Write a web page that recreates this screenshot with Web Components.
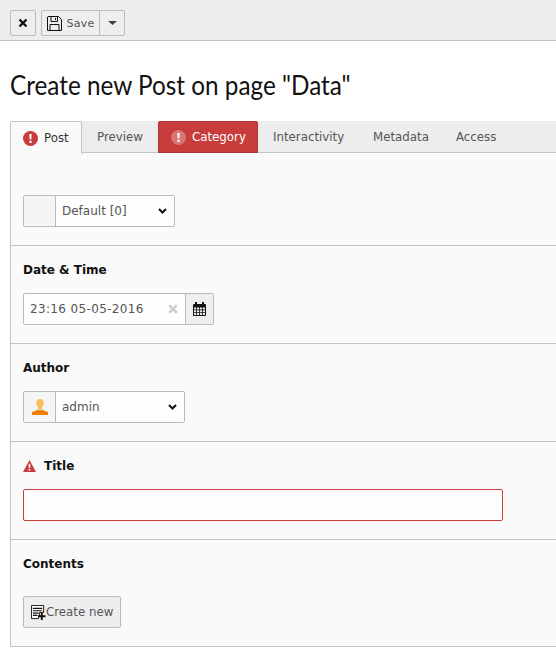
<!DOCTYPE html>
<html>
<head>
<meta charset="utf-8">
<title>Create new Post</title>
<style>
    html, body { margin: 0; padding: 0; background: #fff; overflow: hidden; height: 658px; }
    body { font-family: "DejaVu Sans", Verdana, sans-serif; font-size: 12px; color: #333; }
    svg { display: block; }
</style>
</head>
<body>

<doc-toolbar></doc-toolbar>
<page-title>Create new Post on page "Data"</page-title>

<tab-bar>
    <tab-item active error style="width:72px">Post</tab-item>
    <tab-item style="width:76px">Preview</tab-item>
    <tab-item danger error style="width:100px">Category</tab-item>
    <tab-item style="width:101px">Interactivity</tab-item>
    <tab-item style="width:83px;padding-left:14px">Metadata</tab-item>
    <tab-item style="padding-left:14px">Access</tab-item>
</tab-bar>

<form-panel>
    <form-section top>
        <select-box width="152" value="Default [0]"></select-box>
    </form-section>
    <form-section label="Date &amp; Time">
        <date-input value="23:16 05-05-2016"></date-input>
    </form-section>
    <form-section label="Author">
        <select-box width="162" value="admin" icon="user"></select-box>
    </form-section>
    <form-section label="Title" warn>
        <text-input></text-input>
    </form-section>
    <form-section label="Contents" last>
        <create-button>Create new</create-button>
    </form-section>
</form-panel>

<script>
// Small helper, every component sets its shadow markup the same way
class BaseElement extends HTMLElement {
    constructor() {
        super();
        this.attachShadow({ mode: 'open' });
    }
    connectedCallback() {
        this.shadowRoot.innerHTML = this.markup();
    }
}

class DocToolbar extends BaseElement {
    markup() {
        return `
            <style>
                :host { display: flex; box-sizing: border-box; height: 41px; padding: 10px 10px 0; gap: 5px;
                        background: #ededed; border-bottom: 1px solid #c3c3c3; }
                .btn { box-sizing: border-box; height: 26px; display: flex; align-items: center; justify-content: center;
                       background: #eee; border: 1px solid #bbb; border-radius: 2px; }
                .close { width: 26px; }
                .group { display: flex; }
                .save { width: 59px; gap: 5px; border-radius: 2px 0 0 2px; color: #555; font-size: 11px; letter-spacing: .2px; }
                .more { width: 26px; margin-left: -1px; border-radius: 0 2px 2px 0; }
            </style>
            <div class="btn close">
                <svg width="10" height="10" viewBox="0 0 10 10"><path d="M1.5 1.5L8.5 8.5M8.5 1.5L1.5 8.5" stroke="#111" stroke-width="2.4" fill="none"/></svg>
            </div>
            <div class="group">
                <div class="btn save">
                    <svg width="15" height="15" viewBox="0 0 15 15" fill="none" stroke="#111" stroke-width="1">
                        <path d="M1 .5H11.5L14.5 3.5V14.5H.5V1z"/>
                        <path d="M4 .5V5.5H10.5V.5M8.5 2V4"/>
                        <path d="M3 14.5V8.5H12V14.5"/>
                    </svg>
                    <span>Save</span>
                </div>
                <div class="btn more">
                    <svg width="9" height="4" viewBox="0 0 9 4"><path d="M0 0H9L4.5 4z" fill="#444"/></svg>
                </div>
            </div>
        `;
    }
}

class PageTitle extends BaseElement {
    markup() {
        return `
            <style>
                :host { display: block; height: 80px; padding: 29px 0 0 10px; box-sizing: border-box; white-space: nowrap;
                        font-family: Lato, "Liberation Sans", sans-serif; font-size: 27px; line-height: 30px; color: #111; }
                /* no condensed face installed, so squeeze the text to the heading's width */
                span { display: inline-block; transform: scaleX(.9); transform-origin: 0 0; }
            </style>
            <span><slot></slot></span>
        `;
    }
}

class TabBar extends BaseElement {
    markup() {
        return `
            <style>
                :host { display: flex; box-sizing: border-box; height: 32px; margin-left: 10px;
                        background: #ededed; border-bottom: 1px solid #c3c3c3; }
            </style>
            <slot></slot>
        `;
    }
}

class TabItem extends BaseElement {
    markup() {
        const danger = this.hasAttribute('danger');
        const fill = danger ? 'rgba(255,255,255,.3)' : '#c83c3c';
        const icon = this.hasAttribute('error') ? `
            <svg width="15" height="15" viewBox="0 0 15 15">
                <circle cx="7.5" cy="7.5" r="7.5" fill="${fill}"/>
                <path d="M6.3 3H8.7L8.3 8.6H6.7z M6.4 9.8H8.6V12H6.4z" fill="#fff"/>
            </svg>` : '';
        return `
            <style>
                :host { display: flex; align-items: center; gap: 6px; box-sizing: border-box; height: 32px;
                        padding: 0 0 0 15px; color: #555; white-space: nowrap; font-size: 11.8px; }
                :host([active]) { height: 33px; background: #fafafa; color: #333; border: 1px solid #c3c3c3; border-bottom: 0;
                                  border-radius: 2px 2px 0 0; padding: 0 0 0 12px; }
                :host([danger]) { height: 32px; background: #c83c3c; color: #fff; border: 1px solid #b53434; border-radius: 2px 2px 0 0; padding: 0 0 0 12px; }
            </style>
            ${icon}<slot></slot>
        `;
    }
}

class FormPanel extends BaseElement {
    markup() {
        return `
            <style>
                :host { display: block; margin-left: 10px; background: #fafafa; border-left: 1px solid #c3c3c3; border-bottom: 1px solid #c3c3c3; }
            </style>
            <slot></slot>
        `;
    }
}

class FormSection extends BaseElement {
    markup() {
        const label = this.getAttribute('label');
        const warn = this.hasAttribute('warn') ? `
            <svg width="13" height="12" viewBox="0 0 13 12" style="flex:none"><path d="M6.5 0L13 12H0z" fill="#c83c3c"/><path d="M5.7 3.8H7.3V8H5.7zM5.7 9H7.3V10.6H5.7z" fill="#fff"/></svg>` : '';
        return `
            <style>
                :host { display: block; box-sizing: border-box; height: 98px; padding: 15px 12px 0; border-bottom: 1px solid #c3c3c3; }
                :host([top]) { height: 93px; padding-top: 42px; }
                :host([last]) { height: 106px; border-bottom: 0; }
                .label { display: flex; align-items: center; gap: 8px; height: 18px; margin-bottom: 14px; font-weight: bold; font-size: 12px; color: #111; }
                :host([last]) .label { margin-bottom: 23px; }
            </style>
            ${label ? `<div class="label">${warn}<span>${label.replace('&', '&amp;')}</span></div>` : ''}
            <slot></slot>
        `;
    }
}

class SelectBox extends BaseElement {
    markup() {
        const user = this.getAttribute('icon') === 'user' ? `
            <svg width="16" height="16" viewBox="0 0 16 16">
                <path d="M8 0C5.6 0 4.2 1.5 4.2 3.6 4.2 6 5.6 8 6.3 9V11.5H9.7V9C10.4 8 11.8 6 11.8 3.6 11.8 1.5 10.4 0 8 0z" fill="#f9bd5c"/>
                <path d="M0 16V13.2L5.8 10.8 8 11.6 10.2 10.8 16 13.2V16z" fill="#ef7b00"/>
            </svg>` : '';
        return `
            <style>
                :host { display: flex; box-sizing: border-box; width: ${this.getAttribute('width')}px; height: 32px;
                        background: #fefefe; border: 1px solid #bbb; border-radius: 2px; color: #555; }
                .icon { width: 31px; flex: none; display: flex; align-items: center; justify-content: center; background: #f5f5f5; border-right: 1px solid #bbb; }
                .value { flex: 1; display: flex; align-items: center; justify-content: space-between; padding: 0 7px 0 6px; }
            </style>
            <div class="icon">${user}</div>
            <div class="value">
                <span>${this.getAttribute('value')}</span>
                <svg width="9" height="6" viewBox="0 0 9 6"><path d="M1 1L4.5 4.5L8 1" stroke="#111" stroke-width="2" fill="none"/></svg>
            </div>
        `;
    }
}

class DateInput extends BaseElement {
    markup() {
        return `
            <style>
                :host { display: flex; box-sizing: border-box; width: 191px; height: 32px; background: #fefefe;
                        border: 1px solid #bbb; border-radius: 2px; color: #555; }
                .value { flex: 1; display: flex; align-items: center; justify-content: space-between; padding: 0 7px 0 6px; letter-spacing: .35px; }
                .cal { width: 27px; flex: none; display: flex; align-items: center; justify-content: center; background: #eee; border-left: 1px solid #bbb; }
            </style>
            <div class="value">
                <span>${this.getAttribute('value')}</span>
                <svg width="10" height="10" viewBox="0 0 10 10"><path d="M1.2 1.2L8.8 8.8M8.8 1.2L1.2 8.8" stroke="#ccc" stroke-width="2.4" fill="none"/></svg>
            </div>
            <div class="cal">
                <svg width="13" height="14" viewBox="0 0 13 14" fill="none" stroke="#111" stroke-width="1">
                    <path d="M.5 2.5H12.5V13.5H.5zM.5 5H12.5" />
                    <path d="M.5 3.5H12.5M.5 4.5H12.5" />
                    <path d="M3.5 5V13.5M6.5 5V13.5M9.5 5V13.5M.5 7.8H12.5M.5 10.6H12.5" stroke-width=".8"/>
                    <path d="M3 0V3M10 0V3" stroke-width="2"/>
                </svg>
            </div>
        `;
    }
}

class TextInput extends BaseElement {
    markup() {
        return `
            <style>
                :host { display: block; box-sizing: border-box; width: 480px; height: 32px; background: #fefefe;
                        border: 1px solid #c83c3c; border-radius: 2px; }
            </style>
        `;
    }
}

class CreateButton extends BaseElement {
    markup() {
        return `
            <style>
                :host { display: inline-flex; align-items: center; box-sizing: border-box; width: 98px; height: 32px; padding: 0 0 0 7px;
                        background: #eee; border: 1px solid #bbb; border-radius: 2px; color: #555; font-size: 11.8px; white-space: nowrap; }
            </style>
            <svg width="15" height="15" viewBox="0 0 16 16">
                <path d="M.5 .5H13.5V8H9V12H8V14.5H.5z" fill="#fff" stroke="#111"/>
                <path d="M2 3H12V4.2H2zM2 5.5H12V6.7H2zM2 8H8V9.2H2zM2 10.5H7V11.7H2z" fill="#111"/>
                <path d="M10.5 8.5H12.5V11H15.5V13H12.5V16H10.5V13H7.5V11H10.5z" fill="#111"/>
            </svg>
            <slot></slot>
        `;
    }
}

customElements.define('doc-toolbar', DocToolbar);
customElements.define('page-title', PageTitle);
customElements.define('tab-bar', TabBar);
customElements.define('tab-item', TabItem);
customElements.define('form-panel', FormPanel);
customElements.define('form-section', FormSection);
customElements.define('select-box', SelectBox);
customElements.define('date-input', DateInput);
customElements.define('text-input', TextInput);
customElements.define('create-button', CreateButton);
</script>
</body>
</html>
